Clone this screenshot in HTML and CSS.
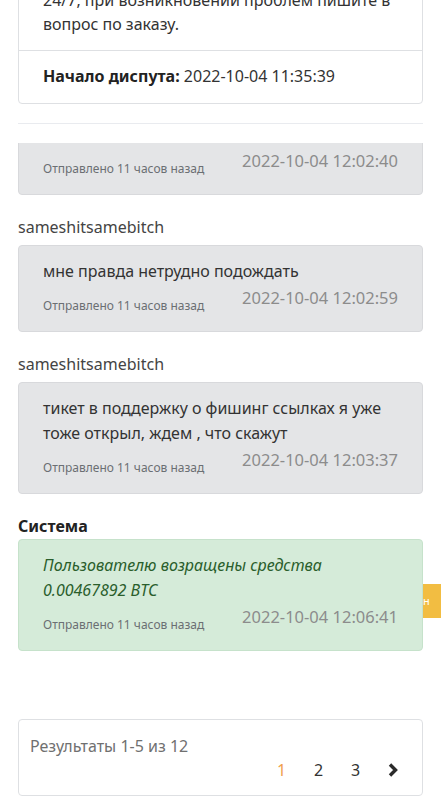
FILE: index.html
```
<!DOCTYPE html>
<html lang="ru">
<head>
    <meta charset="UTF-8">
    <meta name="viewport" content="width=device-width, initial-scale=1.0">
    <title>Диспут</title>
    <link rel="stylesheet" href="styles.css">
</head>
<body>
    <div class="page">
        <!-- Dispute info -->
        <div class="card info-card">
            <div class="info-body">
                <p>Поддержка работает</p>
                <p>24/7, при возникновении проблем пишите в</p>
                <p>вопрос по заказу.</p>
            </div>
            <div class="info-footer">
                <b>Начало диспута:</b> 2022-10-04 11:35:39
            </div>
        </div>

        <hr class="divider">

        <!-- Messages -->
        <div class="chat">
            <div class="chat-list">
                <div class="author">sameshitsamebitch</div>
                <div class="msg">
                    <div class="msg-text">ясно, ок</div>
                    <div class="msg-meta">
                        <span class="sent">Отправлено 11 часов назад</span>
                        <span class="date">2022-10-04 12:02:40</span>
                    </div>
                </div>

                <div class="author">sameshitsamebitch</div>
                <div class="msg">
                    <div class="msg-text">мне правда нетрудно подождать</div>
                    <div class="msg-meta">
                        <span class="sent">Отправлено 11 часов назад</span>
                        <span class="date">2022-10-04 12:02:59</span>
                    </div>
                </div>

                <div class="author">sameshitsamebitch</div>
                <div class="msg">
                    <div class="msg-text">тикет в поддержку о фишинг ссылках я уже тоже открыл, ждем , что скажут</div>
                    <div class="msg-meta">
                        <span class="sent">Отправлено 11 часов назад</span>
                        <span class="date">2022-10-04 12:03:37</span>
                    </div>
                </div>

                <div class="author system">Система</div>
                <div class="msg msg-system">
                    <div class="msg-text">Пользователю возращены средства 0.00467892 BTC</div>
                    <div class="msg-meta">
                        <span class="sent">Отправлено 11 часов назад</span>
                        <span class="date">2022-10-04 12:06:41</span>
                    </div>
                </div>
            </div>
        </div>

        <!-- Pagination -->
        <div class="card pager">
            <div class="pager-info">Результаты 1-5 из 12</div>
            <div class="pager-links">
                <a class="active">1</a>
                <a>2</a>
                <a>3</a>
                <a class="next">
                    <svg width="12" height="16" viewBox="0 0 12 16"><path d="M3 2.5l5.5 5.5-5.5 5.5" fill="none" stroke="#2b2b2b" stroke-width="3.4"/></svg>
                </a>
            </div>
        </div>
    </div>

    <div class="side-tab">н</div>
</body>
</html>
```
FILE: styles.css
```
body {
    font-family: 'Noto Sans', 'Open Sans', sans-serif;
    margin: 0;
    padding: 0;
    background: #fff;
    color: #333;
    font-size: 16px;
    line-height: 24px;
    overflow: hidden;
}

p {
    margin: 0;
}

.page {
    padding: 0 18px;
    margin-top: -39px;
}

.card {
    background: #fff;
    border: 1px solid #dee0e3;
    border-radius: 4px;
}

.info-body {
    padding: 2px 24px 14px;
}

.info-footer {
    border-top: 1px solid #dee0e3;
    padding: 13px 24px 15px;
}

.info-footer b {
    color: #222;
}

.divider {
    border: none;
    border-top: 1px solid #e9ebef;
    margin: 19px 0 19px;
}

.chat {
    height: 529px;
    overflow: hidden;
}

.chat-list {
    margin-top: -65px;
}

.author {
    color: #444;
    margin-bottom: 6px;
}

.author.system {
    font-weight: bold;
    color: #222;
    margin-bottom: 1px;
}

.msg {
    background: #e4e5e7;
    border: 1px solid #d8d9dc;
    border-radius: 4px;
    padding: 13px 24px 16px;
    margin-bottom: 20px;
}

.msg-system {
    background: #d5ebd9;
    border-color: #c6e2cb;
}

.msg-system .msg-text {
    color: #2a5e2c;
    font-style: italic;
}

.msg-text {
    line-height: 25px;
}

.msg-meta {
    display: flex;
    justify-content: space-between;
    align-items: flex-end;
    margin-top: 2px;
}

.sent {
    font-size: 12px;
    color: #6b6f73;
    line-height: 18px;
}

.date {
    color: #8c8c8c;
    font-size: 16.5px;
    margin-bottom: 5px;
}

.pager {
    margin-top: 47px;
    padding: 14px 11px 13px;
}

.pager-info {
    color: #707070;
}

.pager-links {
    display: flex;
    justify-content: flex-end;
}

.pager-links a {
    width: 37px;
    text-align: center;
    color: #333;
}

.pager-links a.active {
    color: #f0a04b;
}

.pager-links .next svg {
    vertical-align: middle;
    margin-top: -3px;
}

.side-tab {
    position: absolute;
    right: 0;
    top: 584px;
    width: 18px;
    height: 34px;
    background: #f2bd42;
    color: #fff;
    font-size: 11px;
    line-height: 34px;
}
```
